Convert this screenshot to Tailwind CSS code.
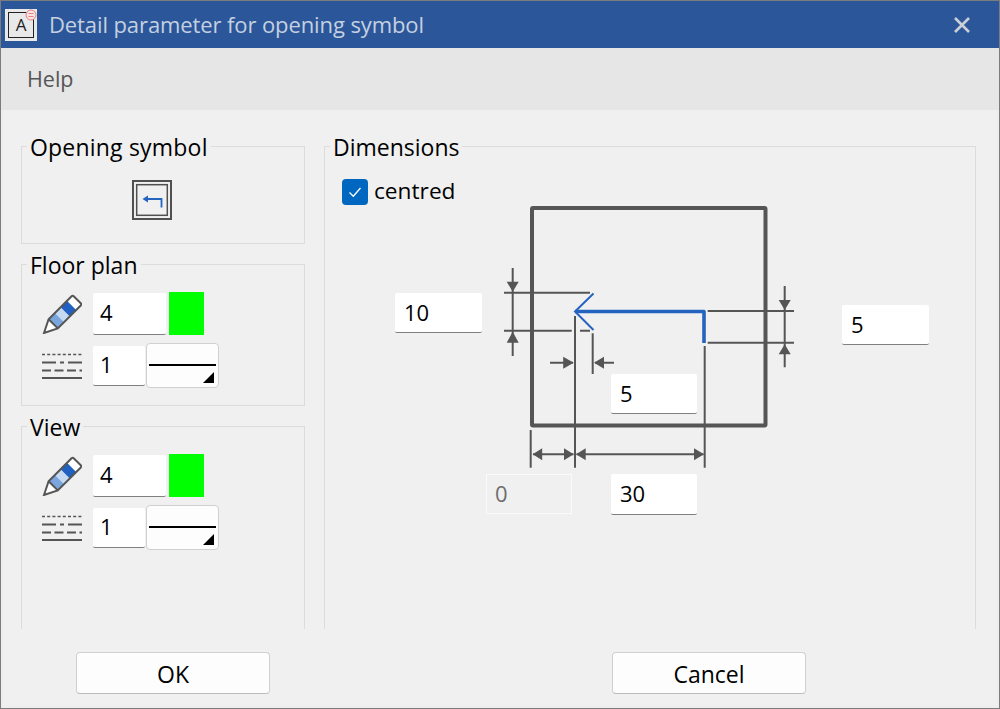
<!DOCTYPE html>
<html lang="en">
<head>
  <meta charset="UTF-8" />
  <title>Detail parameter for opening symbol</title>
  <script src="https://cdn.jsdelivr.net/npm/@tailwindcss/browser@4"></script>
</head>
<body class="bg-[#f0f0f0]">
  <div class="w-[1000px] h-[709px] flex flex-col overflow-hidden border border-[#7c7c7c] bg-[#eeeeee] font-['Open_Sans',sans-serif] text-[23px] text-black">

    <!-- Title bar -->
    <div class="h-[47px] shrink-0 flex items-center bg-[#2b579a] pl-1 pr-[28px]">
      <div class="relative w-[32px] h-[32px] bg-[#e9e9e9]">
        <div class="absolute left-[3px] top-[3px] w-[26px] h-[26px] border border-[#222] flex items-center justify-center text-[17px] leading-none text-[#222]">A</div>
        <svg class="absolute right-0 top-0" width="12" height="12" viewBox="0 0 12 12">
          <circle cx="6" cy="6" r="5" fill="#f4e4e4" stroke="#e88080"/>
          <path d="M3.5 4.5h5M3.5 7.5h5" stroke="#e88080"/>
        </svg>
      </div>
      <div class="ml-[12px] text-[#c5d0e0] text-[22px] tracking-[-0.1px]">Detail parameter for opening symbol</div>
      <svg class="ml-auto" width="18" height="18" viewBox="0 0 18 18">
        <path d="M2 2l14 14M16 2L2 16" stroke="#cbd0d8" stroke-width="2.6"/>
      </svg>
    </div>

    <!-- Menu -->
    <div class="h-[62px] shrink-0 flex items-center bg-[#e6e6e6] pl-[26px] pt-[1px] text-[#555] text-[21.5px]">Help</div>

    <!-- Content -->
    <div class="flex-1 mx-[3px] mb-[3px] bg-[#f0f0f0] flex flex-col">
      <div class="h-[519px] pt-[36px] pl-[17px] flex gap-[19px]">

        <!-- Left column -->
        <div class="w-[284px] flex flex-col gap-[20px]">
          <div class="relative h-[98px] border border-[#dcdcdc] flex justify-center pt-[33px] pr-[22px]">
            <div class="absolute left-[5px] top-[-16px] px-[3px] bg-[#f0f0f0] leading-[32px] tracking-[0.2px]">Opening symbol</div>
            <svg width="40" height="40" viewBox="0 0 40 40">
              <rect x="1" y="1" width="38" height="38" fill="none" stroke="#505050" stroke-width="2"/>
              <rect x="4.7" y="4.7" width="30.6" height="30.6" fill="none" stroke="#505050" stroke-width="1.5"/>
              <path d="M15 19h14.5v8.5" fill="none" stroke="#2563c0" stroke-width="1.8"/>
              <path d="M10.5 19l5.5-3.5v7z" fill="#2563c0"/>
            </svg>
          </div>

          <div class="relative h-[142px] border border-[#dcdcdc] pt-[27px] pl-[20px] flex flex-col">
            <div class="absolute left-[5px] top-[-16px] px-[3px] bg-[#f0f0f0] leading-[32px]">Floor plan</div>
            <div class="flex items-center h-[43px]">
              <svg width="40" height="40" viewBox="0 0 40 40">
                <g transform="translate(2 39) rotate(-45)">
                  <path d="M13 -6.5H47V6.5H13L0 0Z" fill="#fff"/>
                  <rect x="13" y="-6.5" width="9" height="13" fill="#7aa5dd"/>
                  <rect x="22" y="-6.5" width="8" height="13" fill="#c5d9f0"/>
                  <rect x="30" y="-6.5" width="9" height="13" fill="#2060c0"/>
                  <path d="M0 0L13 -6.5H45.5Q47 -6.5 47 -5V5Q47 6.5 45.5 6.5H13ZM13 -6.5V6.5" fill="none" stroke="#555" stroke-width="2"/>
                </g>
              </svg>
              <div class="ml-[11px] w-[73px] h-[42px] bg-white border-b border-[#808080] rounded-[2px] pl-[7px] pb-[1px] flex items-center text-[22px]">4</div>
              <div class="ml-[3px] w-[35px] h-[43px] bg-[#00ff00]"></div>
            </div>
            <div class="flex items-center h-[45px] mt-[8px]">
              <svg width="40" height="26" viewBox="0 0 40 26">
                <path d="M0 1.5h40" stroke="#555" stroke-width="1.6" stroke-dasharray="3 2.2"/>
                <path d="M0 9.5h14M18 9.5h4M26 9.5h14" stroke="#555" stroke-width="1.8"/>
                <path d="M0 17.5h40" stroke="#555" stroke-width="1.8" stroke-dasharray="9 3.5"/>
                <path d="M0 25h40" stroke="#555" stroke-width="2"/>
              </svg>
              <div class="ml-[11px] w-[52px] h-[40px] bg-white border-b border-[#808080] rounded-[2px] pl-[7px] pb-[1px] flex items-center text-[22px]">1</div>
              <div class="relative ml-[1px] w-[73px] h-[45px] bg-[#fdfdfd] border border-[#d0d0d0] rounded-[4px]">
                <div class="absolute left-[2px] right-[2px] top-[20px] h-[2px] bg-black"></div>
                <svg class="absolute right-[4px] bottom-[4px]" width="11" height="11" viewBox="0 0 11 11"><path d="M11 0V11H0Z" fill="#000"/></svg>
              </div>
            </div>
          </div>

          <div class="relative flex-1 border border-b-0 border-[#dcdcdc] pt-[27px] pl-[20px] flex flex-col">
            <div class="absolute left-[5px] top-[-16px] px-[3px] bg-[#f0f0f0] leading-[32px]">View</div>
            <div class="flex items-center h-[43px]">
              <svg width="40" height="40" viewBox="0 0 40 40">
                <g transform="translate(2 39) rotate(-45)">
                  <path d="M13 -6.5H47V6.5H13L0 0Z" fill="#fff"/>
                  <rect x="13" y="-6.5" width="9" height="13" fill="#7aa5dd"/>
                  <rect x="22" y="-6.5" width="8" height="13" fill="#c5d9f0"/>
                  <rect x="30" y="-6.5" width="9" height="13" fill="#2060c0"/>
                  <path d="M0 0L13 -6.5H45.5Q47 -6.5 47 -5V5Q47 6.5 45.5 6.5H13ZM13 -6.5V6.5" fill="none" stroke="#555" stroke-width="2"/>
                </g>
              </svg>
              <div class="ml-[11px] w-[73px] h-[42px] bg-white border-b border-[#808080] rounded-[2px] pl-[7px] pb-[1px] flex items-center text-[22px]">4</div>
              <div class="ml-[3px] w-[35px] h-[43px] bg-[#00ff00]"></div>
            </div>
            <div class="flex items-center h-[45px] mt-[8px]">
              <svg width="40" height="26" viewBox="0 0 40 26">
                <path d="M0 1.5h40" stroke="#555" stroke-width="1.6" stroke-dasharray="3 2.2"/>
                <path d="M0 9.5h14M18 9.5h4M26 9.5h14" stroke="#555" stroke-width="1.8"/>
                <path d="M0 17.5h40" stroke="#555" stroke-width="1.8" stroke-dasharray="9 3.5"/>
                <path d="M0 25h40" stroke="#555" stroke-width="2"/>
              </svg>
              <div class="ml-[11px] w-[52px] h-[40px] bg-white border-b border-[#808080] rounded-[2px] pl-[7px] pb-[1px] flex items-center text-[22px]">1</div>
              <div class="relative ml-[1px] w-[73px] h-[45px] bg-[#fdfdfd] border border-[#d0d0d0] rounded-[4px]">
                <div class="absolute left-[2px] right-[2px] top-[20px] h-[2px] bg-black"></div>
                <svg class="absolute right-[4px] bottom-[4px]" width="11" height="11" viewBox="0 0 11 11"><path d="M11 0V11H0Z" fill="#000"/></svg>
              </div>
            </div>
          </div>
        </div>

        <!-- Dimensions -->
        <div class="relative w-[652px] border border-b-0 border-[#dcdcdc]">
          <div class="absolute left-[5px] top-[-16px] px-[3px] bg-[#f0f0f0] leading-[32px]">Dimensions</div>
          <div class="absolute left-[17px] top-[29px] flex items-center gap-[6px]">
            <div class="w-[26px] h-[26px] rounded-[4px] bg-[#0067c0] flex items-center justify-center">
              <svg width="14" height="14" viewBox="0 0 14 14"><path d="M1.5 7.5l3.8 3.8L12.5 3" fill="none" stroke="#fff" stroke-width="1.3"/></svg>
            </div>
            <span class="mt-[-2px] text-[22.7px]">centred</span>
          </div>

          <!-- drawing uses window coordinates -->
          <svg class="absolute left-[-1px] top-[-1px]" width="652" height="483" viewBox="324 146 652 483">
            <rect x="532" y="208" width="233.5" height="217.5" rx="1" fill="none" stroke="#555" stroke-width="4"/>
            <g stroke="#555" stroke-width="2" fill="none">
              <path d="M504 292.7H590M504 330.7H571.7M580 330.7H590"/>
              <path d="M512.7 268V356"/>
              <path d="M575 316V467.7M592.7 333.3V374"/>
              <path d="M550 362.7H573M595 362.7H614"/>
              <path d="M707.7 311H794M707.7 342.7H794M784.7 286V367.3"/>
              <path d="M704.7 346V467.7M530.7 430V467.7"/>
              <path d="M533 454.3H573.5M576.5 454.3H703.5"/>
            </g>
            <g fill="#555">
              <path d="M512.7 291.7l-6-10h12z"/>
              <path d="M512.7 331.7l-6 11h12z"/>
              <path d="M573.7 362.7l-10.5-6v12z"/>
              <path d="M594 362.7l10-6v12z"/>
              <path d="M784.7 310l-6-10h12z"/>
              <path d="M784.7 344.3l-6 10h12z"/>
              <path d="M532.7 454.3l9.5-6v12z"/>
              <path d="M573.7 454.3l-9.7-6v12z"/>
              <path d="M576 454.3l9.7-6v12z"/>
              <path d="M704 454.3l-10-6v12z"/>
            </g>
            <path d="M575 311.5H704V343" fill="none" stroke="#2563c0" stroke-width="3.6" stroke-linejoin="round"/>
            <path d="M593.5 293.5L575 311.5L593.5 330" fill="none" stroke="#2563c0" stroke-width="2"/>
          </svg>

          <div class="absolute left-[70px] top-[146px] w-[87px] h-[40px] bg-white border-b border-[#808080] rounded-[2px] pl-[9px] flex items-center text-[22px]">10</div>
          <div class="absolute left-[517px] top-[158px] w-[87px] h-[40px] bg-white border-b border-[#808080] rounded-[2px] pl-[9px] pb-[1px] flex items-center text-[22px]">5</div>
          <div class="absolute left-[286px] top-[227px] w-[86px] h-[40px] bg-white border-b border-[#808080] rounded-[2px] pl-[9px] flex items-center text-[22px]">5</div>
          <div class="absolute left-[161px] top-[327px] w-[86px] h-[40px] bg-[#f0f0f0] border border-[#fafafa] pl-[8px] pb-[2px] flex items-center text-[22px] text-[#6d6d6d]">0</div>
          <div class="absolute left-[286px] top-[327px] w-[86px] h-[41px] bg-white border-b border-[#808080] rounded-[2px] pl-[9px] pb-[1px] flex items-center text-[22px]">30</div>
        </div>
      </div>

      <!-- Buttons -->
      <div class="flex pl-[72px] mt-[23px]">
        <div class="w-[194px] h-[42px] bg-[#fdfdfd] border border-[#d0d0d0] border-b-[#bcbcbc] rounded-[4px] pt-[2px] flex items-center justify-center">OK</div>
        <div class="ml-[342px] w-[194px] h-[42px] bg-[#fdfdfd] border border-[#d0d0d0] border-b-[#bcbcbc] rounded-[4px] pt-[2px] flex items-center justify-center">Cancel</div>
      </div>
    </div>
  </div>
</body>
</html>
